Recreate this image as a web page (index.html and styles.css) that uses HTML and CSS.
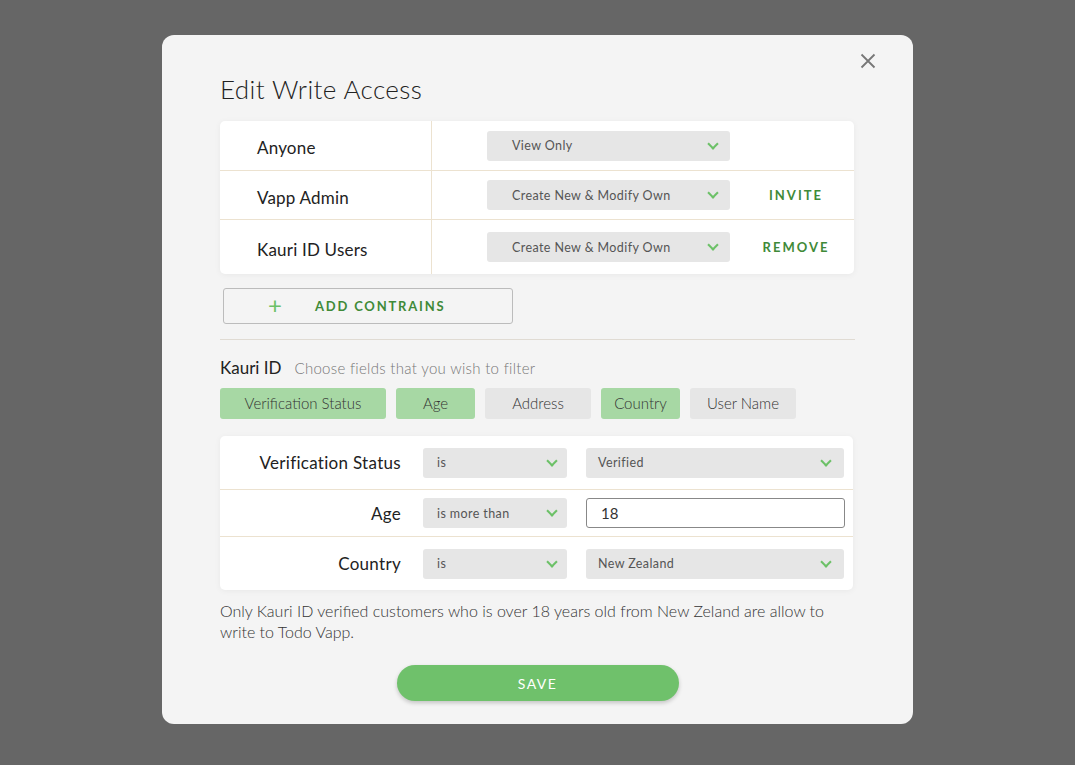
FILE: index.html
```html
<!DOCTYPE html>
<html lang="en">
<head>
  <meta charset="UTF-8">
  <meta name="viewport" content="width=device-width, initial-scale=1.0">
  <title>Edit Write Access</title>
  <link rel="stylesheet" href="styles.css">
</head>
<body>
  <div class="modal">
    <button class="close" aria-label="Close">
      <svg width="16" height="16" viewBox="0 0 16 16"><path d="M1.5 1.5L14.5 14.5M14.5 1.5L1.5 14.5" stroke="#777" stroke-width="1.8" fill="none"/></svg>
    </button>
    <h1>Edit Write Access</h1>

    <div class="card access">
      <div class="access-row">
        <div class="who">Anyone</div>
        <div class="perm">
          <div class="select wide"><span>View Only</span><i class="chev"></i></div>
        </div>
        <div class="action"></div>
      </div>
      <div class="access-row">
        <div class="who">Vapp Admin</div>
        <div class="perm">
          <div class="select wide"><span>Create New &amp; Modify Own</span><i class="chev"></i></div>
        </div>
        <div class="action">INVITE</div>
      </div>
      <div class="access-row tall">
        <div class="who">Kauri ID Users</div>
        <div class="perm">
          <div class="select wide"><span>Create New &amp; Modify Own</span><i class="chev"></i></div>
        </div>
        <div class="action">REMOVE</div>
      </div>
    </div>

    <button class="add-btn"><span class="plus">+</span>ADD CONTRAINS</button>

    <hr>

    <div class="fields-head">
      <span class="fields-title">Kauri ID</span>
      <span class="fields-hint">Choose fields that you wish to filter</span>
    </div>
    <div class="chips">
      <span class="chip on chip-xl">Verification Status</span>
      <span class="chip on chip-sm">Age</span>
      <span class="chip chip-md">Address</span>
      <span class="chip on chip-sm">Country</span>
      <span class="chip chip-md">User Name</span>
    </div>

    <div class="card filters">
      <div class="filter-row">
        <div class="flabel">Verification Status</div>
        <div class="select op"><span>is</span><i class="chev"></i></div>
        <div class="select val"><span>Verified</span><i class="chev"></i></div>
      </div>
      <div class="filter-row">
        <div class="flabel">Age</div>
        <div class="select op"><span>is more than</span><i class="chev"></i></div>
        <input class="val-input" type="text" value="18">
      </div>
      <div class="filter-row">
        <div class="flabel">Country</div>
        <div class="select op"><span>is</span><i class="chev"></i></div>
        <div class="select val"><span>New Zealand</span><i class="chev"></i></div>
      </div>
    </div>

    <p class="note">Only Kauri ID verified customers who is over 18 years old from New Zeland are allow to write to Todo Vapp.</p>

    <div class="save-wrap">
      <button class="save">SAVE</button>
    </div>
  </div>
</body>
</html>
```

FILE: styles.css
```css
body {
  margin: 0;
  background-color: #666666;
  font-family: Lato, "Open Sans", sans-serif;
  color: #222;
  height: 765px;
  overflow: hidden;
}

.modal {
  position: relative;
  box-sizing: border-box;
  width: 751px;
  height: 689px;
  margin: 35px 0 0 162px;
  padding: 0 58px;
  background-color: #f4f4f4;
  border-radius: 12px;
}

.close {
  position: absolute;
  top: 18px;
  right: 37px;
  border: none;
  background: none;
  padding: 0;
  cursor: pointer;
}

h1 {
  margin: 0;
  padding-top: 38px;
  height: 48px;
  font-size: 26px;
  font-weight: 300;
  color: #222;
  letter-spacing: 0.4px;
}

.card {
  background-color: #fff;
  border-radius: 5px;
  box-shadow: 0 1px 6px rgba(0, 0, 0, 0.05);
}

/* access table */
.access {
  width: 634px;
}

.access-row {
  display: flex;
  align-items: center;
  height: 49px;
  border-bottom: 1px solid #ece2d0;
}

.access-row + .access-row {
  height: 48px;
}

.access-row.tall {
  height: 54px;
  border-bottom: none;
}

.who {
  box-sizing: border-box;
  width: 212px;
  height: 100%;
  display: flex;
  align-items: center;
  padding: 4px 0 0 37px;
  font-size: 17px;
  letter-spacing: 0.2px;
  border-right: 1px solid #ece2d0;
}

.perm {
  padding-left: 55px;
}

.action {
  flex: 1;
  text-align: center;
  padding-left: 8px;
  color: #3f8a38;
  font-size: 13px;
  font-weight: 700;
  letter-spacing: 2px;
}

.select {
  box-sizing: border-box;
  display: flex;
  align-items: center;
  justify-content: space-between;
  height: 30px;
  background-color: #e6e6e6;
  border-radius: 3px;
  font-size: 12.5px;
  letter-spacing: 0.4px;
  color: #555;
  padding: 0 13px 0 25px;
}

.select.wide {
  width: 243px;
}

.chev {
  width: 6px;
  height: 6px;
  border-right: 2px solid #6cc167;
  border-bottom: 2px solid #6cc167;
  transform: rotate(45deg);
  margin-top: -4px;
}

/* add button */
.add-btn {
  display: flex;
  align-items: center;
  box-sizing: border-box;
  width: 290px;
  height: 36px;
  margin: 14px 0 0 3px;
  padding: 0 0 0 44px;
  border: 1px solid #bcbcbc;
  border-radius: 3px;
  background-color: #f4f4f4;
  color: #3f8a38;
  font-family: Lato, sans-serif;
  font-size: 13px;
  font-weight: 700;
  letter-spacing: 1.8px;
}

.plus {
  color: #6cc167;
  font-size: 24px;
  font-weight: 400;
  width: 47px;
  text-align: left;
  margin-top: -3px;
}

hr {
  border: none;
  border-top: 1px solid #e0dbd3;
  margin: 15px 0 0;
  width: 635px;
}

.fields-head {
  margin-top: 17px;
  display: flex;
  align-items: baseline;
}

.fields-title {
  font-size: 17px;
  color: #222;
  margin-right: 13px;
}

.fields-hint {
  font-size: 15px;
  font-weight: 300;
  letter-spacing: 0.3px;
  color: #777;
}

.chips {
  display: flex;
  gap: 10px;
  margin-top: 10px;
}

.chip {
  box-sizing: border-box;
  height: 31px;
  line-height: 31px;
  text-align: center;
  border-radius: 3px;
  background-color: #e6e6e6;
  font-size: 15px;
  font-weight: 300;
  color: #333;
}

.chip.on {
  background-color: #a7d8a4;
}

.chip-xl {
  width: 166px;
}

.chip-md {
  width: 106px;
}

.chip-sm {
  width: 79px;
}

/* filter table */
.filters {
  width: 633px;
  margin-top: 17px;
}

.filter-row {
  display: flex;
  align-items: center;
  height: 46px;
  border-bottom: 1px solid #ece2d0;
}

.filter-row:first-child {
  height: 53px;
}

.filter-row:last-child {
  height: 53px;
  border-bottom: none;
}

.flabel {
  width: 181px;
  text-align: right;
  font-size: 17px;
  letter-spacing: 0.3px;
  color: #222;
}

.select.op {
  width: 144px;
  margin-left: 22px;
  padding: 0 11px 0 14px;
}

.select.val {
  width: 258px;
  margin-left: 19px;
  padding: 0 14px 0 12px;
}

.val-input {
  box-sizing: border-box;
  width: 259px;
  height: 30px;
  margin-left: 19px;
  padding: 0 14px;
  border: 1px solid #888;
  border-radius: 3px;
  font-family: Lato, sans-serif;
  font-size: 15px;
  color: #333;
  background-color: #fff;
}

.note {
  margin: 10px 0 0;
  font-size: 16px;
  font-weight: 300;
  line-height: 21px;
  color: #333;
}

.save-wrap {
  display: flex;
  justify-content: center;
  margin-top: 23px;
}

.save {
  width: 282px;
  height: 36px;
  border: none;
  border-radius: 18px;
  background-color: #6fc16b;
  color: #fff;
  font-family: Lato, sans-serif;
  font-size: 14px;
  font-weight: 400;
  letter-spacing: 1.4px;
  box-shadow: 0 2px 4px rgba(0, 0, 0, 0.2);
  cursor: pointer;
}
```
